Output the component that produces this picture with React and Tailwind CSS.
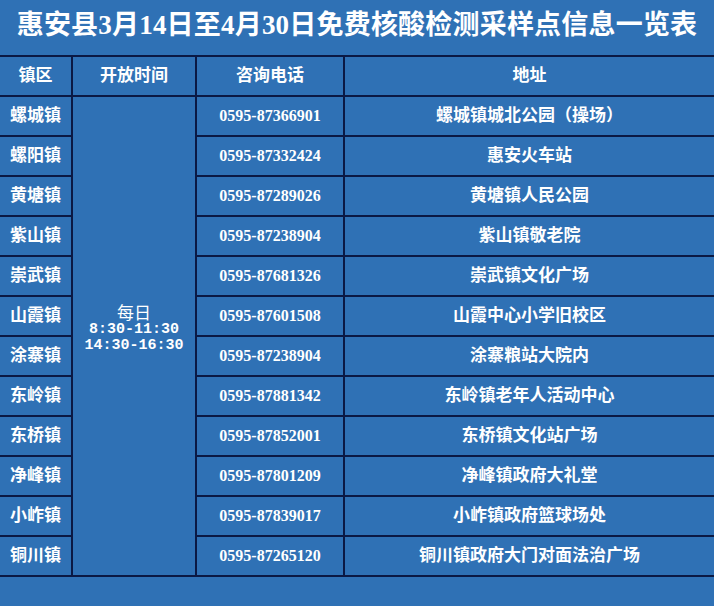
const rows = [
  ["螺城镇", "0595-87366901", "螺城镇城北公园（操场）"],
  ["螺阳镇", "0595-87332424", "惠安火车站"],
  ["黄塘镇", "0595-87289026", "黄塘镇人民公园"],
  ["紫山镇", "0595-87238904", "紫山镇敬老院"],
  ["崇武镇", "0595-87681326", "崇武镇文化广场"],
  ["山霞镇", "0595-87601508", "山霞中心小学旧校区"],
  ["涂寨镇", "0595-87238904", "涂寨粮站大院内"],
  ["东岭镇", "0595-87881342", "东岭镇老年人活动中心"],
  ["东桥镇", "0595-87852001", "东桥镇文化站广场"],
  ["净峰镇", "0595-87801209", "净峰镇政府大礼堂"],
  ["小岞镇", "0595-87839017", "小岞镇政府篮球场处"],
  ["铜川镇", "0595-87265120", "铜川镇政府大门对面法治广场"],
];

const cell = "bg-[#2f71b5] flex items-center justify-center text-white font-bold";
const serif = { fontFamily: "'Liberation Serif', 'Noto Sans CJK SC', serif" };

export default function App() {
  return (
    <div className="min-h-screen w-[714px] bg-[#2f71b5] overflow-hidden" style={serif}>
      <div className="h-[55px] flex items-center justify-center text-white font-bold text-[27px] tracking-[0.2px] pb-1">
        惠安县3月14日至4月30日免费核酸检测采样点信息一览表
      </div>

      <div className="grid grid-cols-[71px_122px_146px_1fr] auto-rows-[38px] gap-[2px] bg-[#0b1944] border-y-2 border-[#0b1944]">
        <div className={`${cell} text-[17px]`}>镇区</div>
        <div className={`${cell} text-[17px]`}>开放时间</div>
        <div className={`${cell} text-[17px]`}>咨询电话</div>
        <div className={`${cell} text-[17px]`}>地址</div>

        {rows.map(([town, phone, addr], i) => (
          <div key={town} className="contents">
            <div className={`${cell} text-[17px]`}>{town}</div>
            {i === 0 && (
              <div className="row-span-12 bg-[#2f71b5] flex flex-col items-center justify-center text-white text-[15px] leading-[16px] pb-4">
                <span className="text-[17px] leading-[20px]" style={{ fontFamily: "'Noto Sans CJK SC', sans-serif" }}>每日</span>
                <span className="font-bold" style={{ fontFamily: "'Liberation Mono', monospace" }}>8:30-11:30</span>
                <span className="font-bold" style={{ fontFamily: "'Liberation Mono', monospace" }}>14:30-16:30</span>
              </div>
            )}
            <div className={`${cell} text-[16px] text-[#eef3fb]`}>{phone}</div>
            <div className={`${cell} text-[17px]`}>{addr}</div>
          </div>
        ))}
      </div>
    </div>
  );
}
